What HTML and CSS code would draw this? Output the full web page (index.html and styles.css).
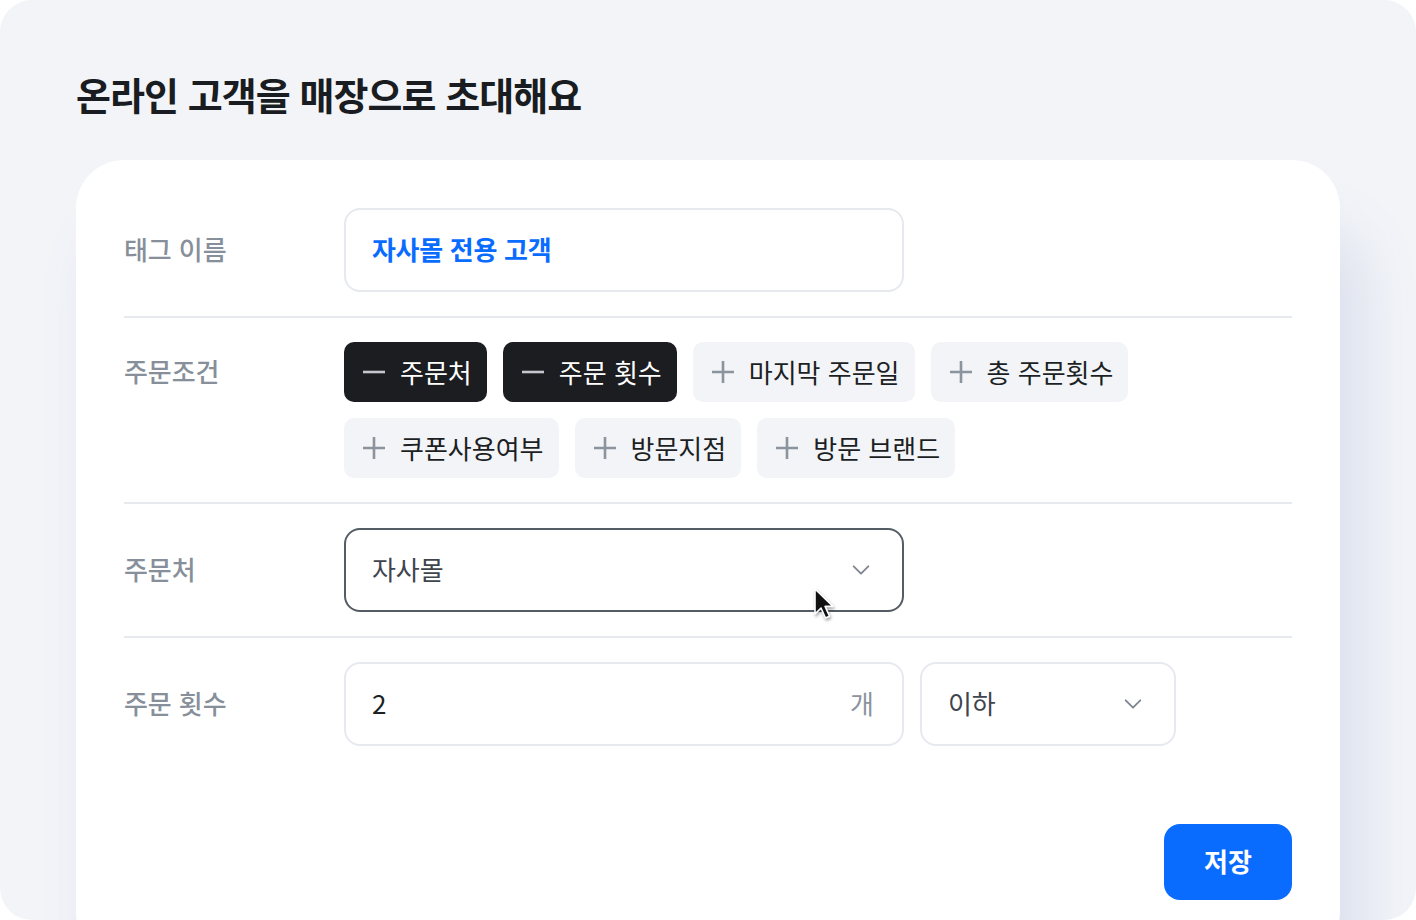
FILE: index.html
```html
<!DOCTYPE html>
<html lang="ko">
<head>
<meta charset="utf-8">
<title>온라인 고객을 매장으로 초대해요</title>
<link rel="stylesheet" href="styles.css">
</head>
<body>
<div class="frame">
  <h1 class="title">온라인 고객을 매장으로 초대해요</h1>
  <div class="card">
    <div class="row row-first">
      <div class="label">태그 이름</div>
      <div class="field field-light"><span class="value value-blue">자사몰 전용 고객</span></div>
    </div>
    <div class="row">
      <div class="label label-chip">주문조건</div>
      <div class="chips">
        <span class="chip chip-dark"><svg class="chip-icon" viewBox="0 0 24 24"><path d="M1 12h22"/></svg>주문처</span>
        <span class="chip chip-dark"><svg class="chip-icon" viewBox="0 0 24 24"><path d="M1 12h22"/></svg>주문 횟수</span>
        <span class="chip"><svg class="chip-icon" viewBox="0 0 24 24"><path d="M1 12h22M12 1v22"/></svg>마지막 주문일</span>
        <span class="chip"><svg class="chip-icon" viewBox="0 0 24 24"><path d="M1 12h22M12 1v22"/></svg>총 주문횟수</span>
        <span class="chip"><svg class="chip-icon" viewBox="0 0 24 24"><path d="M1 12h22M12 1v22"/></svg>쿠폰사용여부</span>
        <span class="chip"><svg class="chip-icon" viewBox="0 0 24 24"><path d="M1 12h22M12 1v22"/></svg>방문지점</span>
        <span class="chip"><svg class="chip-icon" viewBox="0 0 24 24"><path d="M1 12h22M12 1v22"/></svg>방문 브랜드</span>
      </div>
    </div>
    <div class="row">
      <div class="label">주문처</div>
      <div class="field field-active">
        <span class="value value-muted">자사몰</span>
        <svg class="chevron" viewBox="0 0 24 24"><path d="M4 8l8 8 8-8"/></svg>
        <svg class="cursor" viewBox="0 0 26 36"><path d="M3 2v25l6-6 4.5 10 4-1.8-4.4-9.8H21z"/></svg>
      </div>
    </div>
    <div class="row row-last">
      <div class="label">주문 횟수</div>
      <div class="inline-fields">
        <div class="field field-light">
          <span class="value">2</span>
          <span class="unit">개</span>
        </div>
        <div class="field field-light field-small">
          <span class="value value-muted">이하</span>
          <svg class="chevron" viewBox="0 0 24 24"><path d="M4 8l8 8 8-8"/></svg>
        </div>
      </div>
    </div>
    <div class="footer">
      <button class="save">저장</button>
    </div>
  </div>
</div>
</body>
</html>
```

FILE: styles.css
```css
* { box-sizing: border-box; }
html, body { margin: 0; padding: 0; background: #ffffff; }
body {
  font-family: "Noto Sans CJK KR", "Noto Sans", sans-serif;
  color: #1c1f24;
}
.frame {
  width: 1416px;
  height: 920px;
  border-radius: 32px;
  background: #f2f4f8;
  overflow: hidden;
  padding: 0 76px;
}
.title {
  margin: 0;
  padding-top: 69px;
  height: 160px;
  font-size: 38px;
  line-height: 50px;
  font-weight: 700;
  letter-spacing: -0.95px;
  color: #191c20;
}
.card {
  background: #ffffff;
  border-radius: 48px;
  padding: 48px 48px 0;
  min-height: 800px;
  box-shadow: 22px 70px 56px rgba(105, 122, 185, 0.17);
}
.row {
  display: grid;
  grid-template-columns: 220px 1fr;
  align-items: start;
  padding: 24px 0;
  border-bottom: 2px solid #e6e9ee;
}
.row-first { padding-top: 0; }
.row-last { border-bottom: none; }
.label {
  font-size: 26px;
  font-weight: 500;
  line-height: 82px;
  color: #878f9a;
  letter-spacing: -0.1px;
}
.label-chip { line-height: 58px; }
.field {
  position: relative;
  width: 560px;
  height: 84px;
  border: 2px solid #e6e9ee;
  border-radius: 16px;
  background: #ffffff;
  padding: 0 26px;
  display: flex;
  align-items: center;
  justify-content: space-between;
}
.field-active { border-color: #555c66; }
.field-small { width: 256px; }
.value {
  font-size: 26px;
  line-height: 1;
  padding-bottom: 3px;
  color: #1c1f24;
  letter-spacing: -0.1px;
}
.value-blue { color: #0a6cff; font-weight: 700; letter-spacing: -0.3px; }
.value-muted { color: #3f454d; }
.unit {
  font-size: 26px;
  line-height: 1;
  padding-bottom: 3px;
  margin-right: 2px;
  color: #8b939e;
}
.chevron {
  width: 22px;
  height: 22px;
  margin-right: 4px;
  fill: none;
  stroke: #7e8690;
  stroke-width: 2;
  stroke-linecap: round;
  stroke-linejoin: round;
}
.cursor {
  position: absolute;
  left: 466px;
  top: 57px;
  width: 26px;
  height: 36px;
  fill: #111111;
  stroke: #ffffff;
  stroke-width: 1.6;
  stroke-linejoin: round;
  filter: drop-shadow(1px 2px 1.5px rgba(0, 0, 0, 0.35));
}
.inline-fields {
  display: flex;
  gap: 16px;
}
.chips {
  display: flex;
  flex-wrap: wrap;
  gap: 16px;
  width: 820px;
}
.chip {
  display: inline-flex;
  align-items: center;
  gap: 14px;
  height: 60px;
  padding: 0 15px 2px 18px;
  border-radius: 10px;
  background: #f2f4f7;
  color: #1c1f24;
  font-size: 26px;
  letter-spacing: 0;
}
.chip-dark {
  background: #1b1d21;
  color: #ffffff;
}
.chip-icon {
  width: 24px;
  height: 24px;
  margin-top: 2px;
  fill: none;
  stroke: #8b939e;
  stroke-width: 2.6;
}
.chip-dark .chip-icon { stroke: #c4c8ce; }
.footer {
  display: flex;
  justify-content: flex-end;
  padding-top: 54px;
}
.save {
  width: 128px;
  height: 76px;
  border: none;
  border-radius: 16px;
  background: #0a6cff;
  color: #ffffff;
  font-family: inherit;
  font-size: 26px;
  font-weight: 700;
  padding-bottom: 4px;
}
```
